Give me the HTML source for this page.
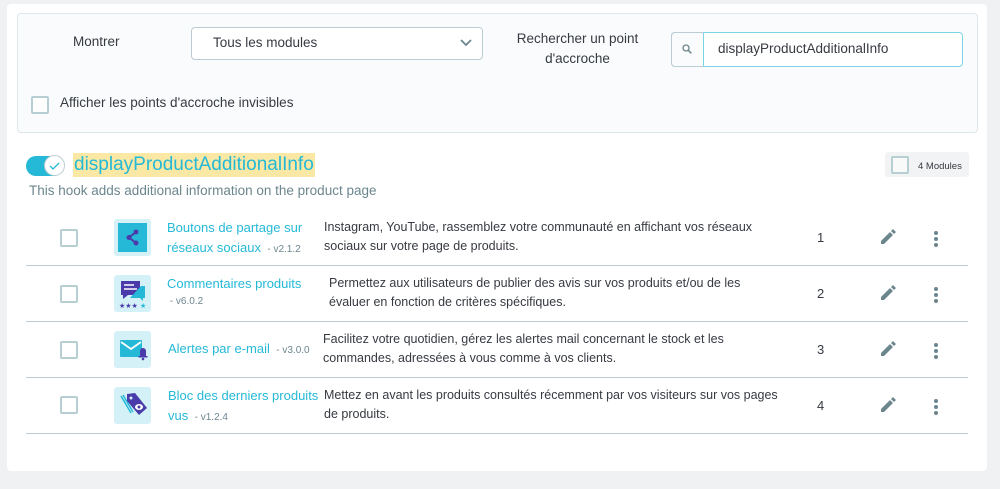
<!DOCTYPE html>
<html><head><meta charset="utf-8"><style>
*{box-sizing:border-box;margin:0;padding:0}
body{width:1000px;height:489px;background:#eff1f2;font-family:"Liberation Sans",sans-serif;color:#363a41;position:relative;overflow:hidden}
.card{position:absolute;left:7px;top:4px;width:980px;height:467px;background:#fff;border-radius:4px}
.panel{position:absolute;left:17px;top:13px;width:961px;height:120px;background:#fafbfc;border:1px solid #dde6e9;border-radius:4px}
.abs{position:absolute}
.cb{position:absolute;width:18px;height:18px;border:2px solid #b7ced3;border-radius:2px;background:#fff}
.t13{font-size:13px}
.name{color:#25b9d7;font-size:13px;line-height:20px}
.ver{color:#6c868e;font-size:10px}
.desc{font-size:12.5px;line-height:19px;color:#363a41}
.sep{position:absolute;left:26px;width:942px;height:1px;background:#bbcdd2}
.ic{position:absolute;width:37px;height:37px;background:#d4f1f7;border-radius:3px}
</style></head><body>
<div class="card"></div>
<div class="panel"></div>
<div class="abs t13" style="left:73px;top:34px;font-size:13.5px">Montrer</div>
<div class="abs" style="left:191px;top:27px;width:292px;height:33px;border:1px solid #bbcdd2;border-radius:4px;background:#fff"></div>
<div class="abs t13" style="left:213px;top:35px;font-size:13.5px">Tous les modules</div>
<svg class="abs" style="left:459px;top:38px" width="14" height="10"><path d="M2 2l5 5 5-5" stroke="#6c868e" stroke-width="1.8" fill="none"/></svg>
<div class="abs" style="left:500px;top:29px;width:155px;text-align:center;font-size:13.5px;line-height:20px">Rechercher un point<br>d'accroche</div>
<div class="abs" style="left:671px;top:32px;width:292px;height:35px;border:1px solid #7cd5e7;border-radius:4px;background:#fff"></div>
<div class="abs" style="left:671px;top:32px;width:33px;height:35px;border:1px solid #bbcdd2;border-right:1px solid #7cd5e7;border-radius:4px 0 0 4px;background:#fafbfc"></div>
<svg class="abs" style="left:682px;top:44px" width="10" height="10"><circle cx="4" cy="4" r="3" stroke="#6c868e" stroke-width="1.3" fill="none"/><path d="M6.3 6.3l3 3" stroke="#6c868e" stroke-width="1.5"/></svg>
<div class="abs t13" style="left:718px;top:41px;font-size:13.5px">displayProductAdditionalInfo</div>
<div class="cb" style="left:31px;top:96px"></div>
<div class="abs t13" style="left:60px;top:95px;font-size:13.5px">Afficher les points d'accroche invisibles</div>

<div class="abs" style="left:26px;top:156px;width:38px;height:20px;border-radius:10px;background:#25b9d7"></div>
<div class="abs" style="left:44px;top:155px;width:21px;height:21px;border-radius:50%;background:#fff;border:1px solid #bbcdd2"></div>
<svg class="abs" style="left:48px;top:161px" width="13" height="10"><path d="M2 5l3 3 6-6" stroke="#25b9d7" stroke-width="1.3" fill="none"/></svg>
<div class="abs" style="left:73px;top:153px;height:24px;padding:0 1px;background:#fbe8a4;color:#25b9d7;font-size:19px;line-height:24px">displayProductAdditionalInfo</div>
<div class="abs" style="left:29px;top:183px;color:#6c868e;font-size:13.5px">This hook adds additional information on the product page</div>
<div class="abs" style="left:885px;top:152px;width:84px;height:25px;background:#f1f3f4;border-radius:3px"></div>
<div class="cb" style="left:891px;top:156px;background:#f8fafa"></div>
<div class="abs" style="left:918px;top:161px;font-size:9.5px;color:#363a41">4 Modules</div>

<div class="sep" style="top:265px"></div>
<div class="sep" style="top:321px"></div>
<div class="sep" style="top:377px"></div>
<div class="sep" style="top:433px"></div>

<div class="cb" style="left:60px;top:229px"></div>
<div class="ic" style="left:114px;top:219px"><div class="abs" style="left:4px;top:4px;width:29px;height:29px;background:#25b9d7"></div>
<svg class="abs" style="left:8px;top:8px" width="21" height="21"><path d="M14 5L7 10.5L14 16" stroke="#4a3bab" stroke-width="2" fill="none"/><circle cx="14" cy="5" r="2.5" fill="#4a3bab"/><circle cx="7" cy="10.5" r="2.5" fill="#4a3bab"/><circle cx="14" cy="16" r="2.5" fill="#4a3bab"/></svg></div>
<div class="abs name" style="left:167px;top:218px">Boutons de partage sur<br>réseaux sociaux <span class="ver">&nbsp;- v2.1.2</span></div>
<div class="abs desc" style="left:324px;top:218px">Instagram, YouTube, rassemblez votre communauté en affichant vos réseaux<br>sociaux sur votre page de produits.</div>

<div class="cb" style="left:60px;top:285px"></div>
<div class="ic" style="left:114px;top:275px"><svg width="37" height="37"><path d="M7 6h19v14H14l-5 4v-4H7z" fill="#4a3bab"/><path d="M27 11h4v12h-2v3l-3-3h-10" fill="#25b9d7"/><path d="M10 10h10M10 14h13" stroke="#fff" stroke-width="1.5"/><text x="5" y="33" font-size="7" fill="#4a3bab">★★★</text><text x="26" y="33" font-size="7" fill="#25b9d7">★</text></svg></div>
<div class="abs name" style="left:167px;top:274px">Commentaires produits</div>
<div class="abs ver" style="left:167px;top:296px">&nbsp;- v6.0.2</div>
<div class="abs desc" style="left:329px;top:274px">Permettez aux utilisateurs de publier des avis sur vos produits et/ou de les<br>évaluer en fonction de critères spécifiques.</div>

<div class="cb" style="left:60px;top:341px"></div>
<div class="ic" style="left:114px;top:331px"><svg width="37" height="37"><rect x="6" y="9" width="22" height="17" rx="1" fill="#25b9d7"/><path d="M7 11l10 7 10-7" stroke="#fff" stroke-width="1.8" fill="none"/><path d="M26 20a3 3 0 0 1 6 0v5h1.5v1.5h-9V25H26z" fill="#4a3bab"/><circle cx="29" cy="28" r="1.3" fill="#4a3bab"/></svg></div>
<div class="abs name" style="left:168px;top:339px">Alertes par e-mail <span class="ver">&nbsp;- v3.0.0</span></div>
<div class="abs desc" style="left:323px;top:330px">Facilitez votre quotidien, gérez les alertes mail concernant le stock et les<br>commandes, adressées à vous comme à vos clients.</div>

<div class="cb" style="left:60px;top:396px"></div>
<div class="ic" style="left:114px;top:387px"><svg width="37" height="37"><path d="M7 9l10 17M9 8l10 17" stroke="#25b9d7" stroke-width="1.5"/><path d="M13 7l8-1 12 15-8 7-12-14z" fill="#4a3bab"/><circle cx="17" cy="11" r="1.5" fill="#d4f1f7"/><ellipse cx="25" cy="20" rx="4" ry="3" fill="#fff"/><circle cx="25" cy="20" r="1.5" fill="#4a3bab"/></svg></div>
<div class="abs name" style="left:168px;top:386px">Bloc des derniers produits<br>vus <span class="ver">&nbsp;- v1.2.4</span></div>
<div class="abs desc" style="left:324px;top:386px">Mettez en avant les produits consultés récemment par vos visiteurs sur vos pages<br>de produits.</div>

<div class="abs t13" style="left:817px;top:230px">1</div>
<div class="abs t13" style="left:817px;top:286px">2</div>
<div class="abs t13" style="left:817px;top:342px">3</div>
<div class="abs t13" style="left:817px;top:398px">4</div>
<svg class="abs" style="left:878px;top:228px" width="20" height="200">
<g fill="#6c868e"><path id="p" d="M3 16v-3l9-9 3 3-9 9zM13 3l2-2 3 3-2 2z"/>
<use href="#p" y="56"/><use href="#p" y="112"/><use href="#p" y="168"/></g></svg>
<svg class="abs" style="left:932px;top:229px" width="8" height="200"><g fill="#6c868e">
<circle cx="4" cy="4" r="2"/><circle cx="4" cy="10" r="2"/><circle cx="4" cy="16" r="2"/>
<circle cx="4" cy="60" r="2"/><circle cx="4" cy="66" r="2"/><circle cx="4" cy="72" r="2"/>
<circle cx="4" cy="116" r="2"/><circle cx="4" cy="122" r="2"/><circle cx="4" cy="128" r="2"/>
<circle cx="4" cy="172" r="2"/><circle cx="4" cy="178" r="2"/><circle cx="4" cy="184" r="2"/></g></svg>
</body></html>
